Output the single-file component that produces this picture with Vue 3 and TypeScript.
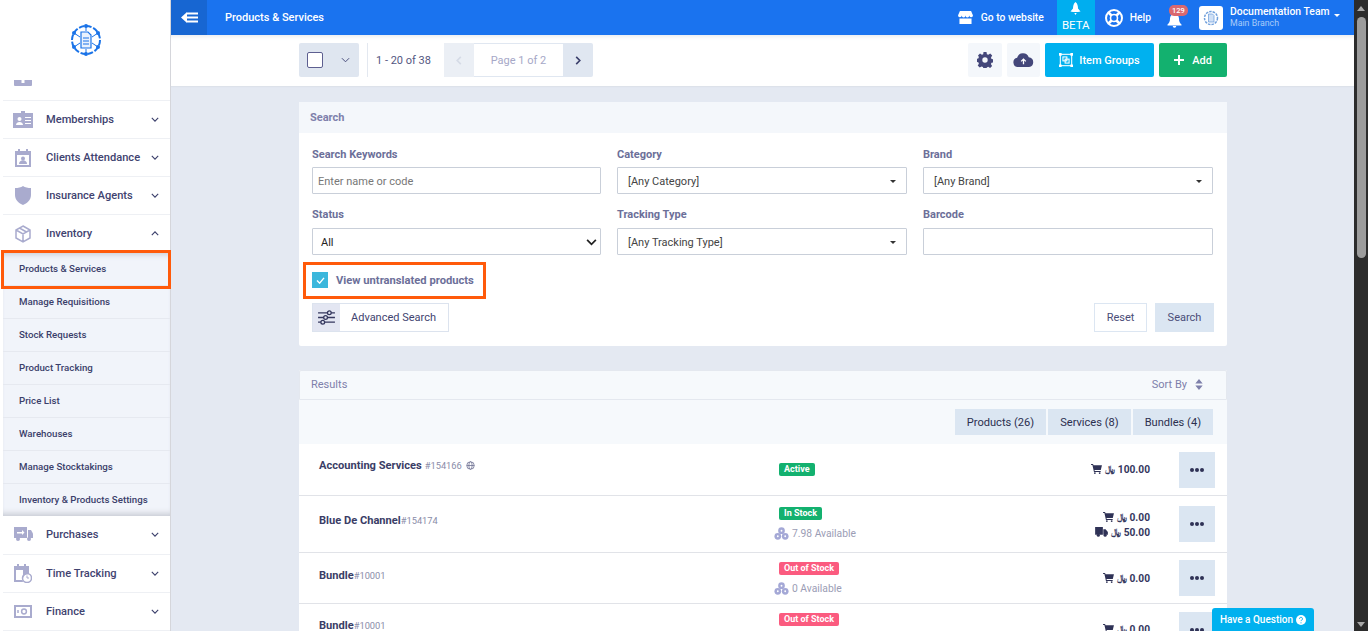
<template>
  <div class="app">
    <aside class="sidebar">
      <div class="logo">
        <svg viewBox="0 0 32 32" width="32" height="32" fill="none" stroke="#1a73e8">
          <circle cx="16" cy="16" r="14" stroke-width="2" stroke-dasharray="5.500 1.800" />
          <g fill="#1a73e8" stroke="none">
            <circle cx="16" cy="2" r="2" /><circle cx="16" cy="30" r="2" />
            <circle cx="4" cy="9" r="2" /><circle cx="28" cy="9" r="2" />
            <circle cx="4" cy="23" r="2" /><circle cx="28" cy="23" r="2" />
          </g>
          <path d="M4 9l6 4M28 9l-6 4M4 23l6-4M28 23l-6-4M16 2v5M16 30v-5" stroke-width="1" />
          <path d="M11 8h7l3 3v13H11z" fill="#eaf2fd" stroke-width="1.200" />
          <path d="M13 14h6M13 17h6M13 20h6" stroke-width="1" />
        </svg>
      </div>
      <nav class="menu">
        <div class="menu-cut">
          <svg viewBox="0 0 18 6" width="18" height="6"><path d="M0 0h18v5a1 1 0 0 1-1 1H1a1 1 0 0 1-1-1z" fill="#a9abce" /><path d="M7.500 0h3v3h-3z" fill="#fff" /></svg>
        </div>
        <a v-for="m in topMenu" :key="m.label" class="menu-item">
          <span class="menu-icon" v-html="m.icon"></span>
          <span class="menu-label">{{ m.label }}</span>
          <svg class="chev" viewBox="0 0 10 6" width="8" height="5"><path :d="m.open ? 'M1 5l4-4 4 4' : 'M1 1l4 4 4-4'" fill="none" stroke="#3b3f6b" stroke-width="1.400" /></svg>
        </a>
        <div class="submenu">
          <a v-for="s in subMenu" :key="s" class="sub-item">{{ s }}</a>
        </div>
        <a v-for="m in bottomMenu" :key="m.label" class="menu-item">
          <span class="menu-icon" v-html="m.icon"></span>
          <span class="menu-label">{{ m.label }}</span>
          <svg class="chev" viewBox="0 0 10 6" width="8" height="5"><path d="M1 1l4 4 4-4" fill="none" stroke="#3b3f6b" stroke-width="1.400" /></svg>
        </a>
      </nav>
      <div class="highlight side-mark"></div>
    </aside>

    <div class="main">
      <header class="topbar">
        <button class="back">
          <svg viewBox="0 0 17 11" width="17" height="11"><path d="M6 0L0 5.500 6 11z" fill="#fff" /><path d="M6 .5h11v2H6zM5 4.500h12v2H5zM6 8.500h11v2H6z" fill="#fff" /></svg>
        </button>
        <span class="page-title">Products &amp; Services</span>
        <div class="top-right">
          <a class="top-link">
            <svg viewBox="0 0 16 14" width="15" height="13"><path d="M2 0h12l2 4.500a2 2 0 0 1-4 .4 2 2 0 0 1-4 0 2 2 0 0 1-4 0 2 2 0 0 1-4-.4zM1.500 8h13v6h-13z" fill="#fff" /></svg>
            <span class="go">Go to website</span>
          </a>
          <div class="beta">
            <svg viewBox="0 0 11 13" width="11" height="13"><path d="M5.500 0C7.500 1.500 8 4 8 6.500l2.500 3-2.500.5H3l-2.500-.5 2.500-3C3 4 3.500 1.500 5.500 0zM4.300 11h2.400l-1.200 2z" fill="#fff" /></svg>
            <span>BETA</span>
          </div>
          <a class="top-link help">
            <svg viewBox="0 0 20 20" width="20" height="20" fill="none" stroke="#fff"><circle cx="10" cy="10" r="8" stroke-width="2" /><circle cx="10" cy="10" r="3.500" stroke-width="1.600" /><path d="M4.500 4.500L7.500 7.500M15.500 4.500l-3 3M4.500 15.500l3-3M15.500 15.500l-3-3" stroke-width="2.600" /></svg>
            <span>Help</span>
          </a>
          <div class="bell">
            <svg viewBox="0 0 14 14" width="15" height="14"><path d="M7 0a4.500 4.500 0 0 1 4.500 4.500c0 3.500 1 4.500 2.500 6v1H0v-1c1.500-1.500 2.500-2.500 2.500-6A4.500 4.500 0 0 1 7 0zM5.200 12h3.600a1.800 1.800 0 0 1-3.600 0z" fill="#fff" /></svg>
            <span class="badge">129</span>
          </div>
          <div class="user">
            <span class="avatar">
              <svg viewBox="0 0 32 32" width="16" height="16" fill="none" stroke="#6f9fdc"><circle cx="16" cy="16" r="13" stroke-width="3" stroke-dasharray="5 2" /><path d="M11 8h8l3 3v13H11z" fill="#cfe0f5" stroke-width="1.500" /></svg>
            </span>
            <span class="user-text">
              <b>Documentation Team</b>
              <i>Main Branch</i>
            </span>
            <span class="caret"></span>
          </div>
        </div>
      </header>

      <div class="toolbar">
        <div class="toolbar-inner">
          <div class="check-drop">
            <span class="check-box"></span>
            <svg viewBox="0 0 10 6" width="9" height="6"><path d="M1 1l4 4 4-4" fill="none" stroke="#4a4e7c" stroke-width="1.100" /></svg>
          </div>
          <span class="range">1 - 20 of 38</span>
          <div class="pager">
            <span class="pg-btn off"><svg viewBox="0 0 6 10" width="6" height="9"><path d="M5 1L1 5l4 4" fill="none" stroke="#d5dbe6" stroke-width="1.800" /></svg></span>
            <span class="pg-text">Page 1 of 2</span>
            <span class="pg-btn on"><svg viewBox="0 0 6 10" width="6" height="9"><path d="M1 1l4 4-4 4" fill="none" stroke="#3b3f6b" stroke-width="1.800" /></svg></span>
          </div>
          <div class="tools">
            <span class="tool">
              <svg viewBox="0 0 16 16" width="16" height="16"><path fill-rule="evenodd" d="M6.500 0h3l.4 2.200 1.400.6 1.900-1.300 2 2.100-1.200 1.900.5 1.400 2 .4v3l-2 .4-.6 1.400 1.200 1.900-2 2-1.900-1.200-1.400.6-.4 1.600h-3l-.4-2-1.400-.6-1.900 1.200-2-2 1.200-1.900-.6-1.400-2.200-.4v-3l2.200-.4.6-1.400L1 3.600l2-2.100 1.900 1.300 1.300-.6zM8 5.300a2.700 2.700 0 1 0 0 5.400 2.700 2.700 0 0 0 0-5.400z" fill="#44477a" /></svg>
            </span>
            <span class="tool upload">
              <svg viewBox="0 0 22 15" width="21" height="14"><path d="M5 15a5 5 0 0 1-.8-9.900A6.500 6.500 0 0 1 16.600 4.500 5.300 5.300 0 0 1 17 15z" fill="#44477a" /><path d="M11 12V7M8.500 9L11 6.500 13.500 9" fill="none" stroke="#fff" stroke-width="1.400" /></svg>
            </span>
            <button class="btn-groups">
              <svg viewBox="0 0 16 16" width="14" height="14" fill="none" stroke="#fff" stroke-width="1.200"><rect x="1.500" y="1.500" width="13" height="13" /><rect x="4.500" y="4.500" width="4.500" height="4.500" /><rect x="7" y="7" width="4.500" height="4.500" /><path d="M0 0h3v3H0zM13 0h3v3h-3zM0 13h3v3H0zM13 13h3v3h-3z" fill="#fff" stroke="none" /></svg>
              Item Groups
            </button>
            <button class="btn-add">
              <svg viewBox="0 0 10 10" width="10" height="10"><path d="M4 0h2v4h4v2H6v4H4V6H0V4h4z" fill="#fff" /></svg>
              Add
            </button>
          </div>
        </div>
      </div>

      <div class="content">
        <section class="card search-card">
          <div class="card-head">Search</div>
          <div class="search-body">
            <div class="grid">
              <label class="field">
                <span>Search Keywords</span>
                <input class="ctl ctl-input" placeholder="Enter name or code" />
              </label>
              <label class="field">
                <span>Category</span>
                <div class="ctl sel">[Any Category]<i class="sel-caret"></i></div>
              </label>
              <label class="field">
                <span>Brand</span>
                <div class="ctl sel">[Any Brand]<i class="sel-caret"></i></div>
              </label>
              <label class="field">
                <span>Status</span>
                <div class="ctl sel native">All
                  <svg viewBox="0 0 12 8" width="11" height="7"><path d="M1 1l5 5 5-5" fill="none" stroke="#222" stroke-width="2" /></svg>
                </div>
              </label>
              <label class="field">
                <span>Tracking Type</span>
                <div class="ctl sel">[Any Tracking Type]<i class="sel-caret"></i></div>
              </label>
              <label class="field">
                <span>Barcode</span>
                <input class="ctl" />
              </label>
            </div>
            <div class="untranslated">
              <span class="tick"><svg viewBox="0 0 10 8" width="9" height="7"><path d="M1 4l3 3 5-6" fill="none" stroke="#fff" stroke-width="1.600" /></svg></span>
              <b>View untranslated products</b>
              <div class="highlight check-mark"></div>
            </div>
            <div class="search-actions">
              <button class="adv">
                <span class="adv-icon">
                  <svg viewBox="0 0 18 16" width="17" height="15" fill="none" stroke="#34375e" stroke-width="1.400"><path d="M0 3h18M0 8h18M0 13h18" /><circle cx="12" cy="3" r="2" fill="#e3e6f2" /><circle cx="8" cy="8" r="2" fill="#e3e6f2" /><circle cx="5" cy="13" r="2" fill="#e3e6f2" /></svg>
                </span>
                <span class="adv-text">Advanced Search</span>
              </button>
              <div class="right-actions">
                <button class="reset">Reset</button>
                <button class="go-search">Search</button>
              </div>
            </div>
          </div>
        </section>

        <section class="card results">
          <div class="res-head">
            <span>Results</span>
            <span class="sort">Sort By
              <svg viewBox="0 0 8 12" width="8" height="11"><path d="M4 0l4 5H0zM4 12L0 7h8z" fill="#7e80ab" /></svg>
            </span>
          </div>
          <div class="tabs">
            <span class="tab">Products (26)</span>
            <span class="tab">Services (8)</span>
            <span class="tab">Bundles (4)</span>
          </div>
          <div v-for="(r, i) in rows" :key="i" class="row" :style="{ height: r.h + 'px' }">
            <div class="row-name" :style="{ paddingTop: r.nameTop + 'px' }">
              <b>{{ r.name }}</b><small :class="{ spaced: r.globe }">{{ r.code }}</small>
              <svg v-if="r.globe" viewBox="0 0 12 12" width="9" height="9" fill="none" stroke="#66688c"><circle cx="6" cy="6" r="5" /><ellipse cx="6" cy="6" rx="2.200" ry="5" /><path d="M1 6h10" /></svg>
            </div>
            <div class="row-status" :style="{ paddingTop: r.statusTop + 'px' }">
              <span class="tag" :class="r.tone">{{ r.status }}</span>
              <span v-if="r.avail" class="avail">
                <svg viewBox="0 0 16 14" width="15" height="13"><g fill="#a4a8d6"><circle cx="8" cy="4" r="3.600" /><circle cx="4" cy="10" r="3.600" /><circle cx="12" cy="10" r="3.600" /></g><g fill="#fff"><circle cx="8" cy="4" r="1" /><circle cx="4" cy="10" r="1" /><circle cx="12" cy="10" r="1" /></g></svg>
                {{ r.avail }}
              </span>
            </div>
            <div class="row-price" :style="{ top: r.priceTop + 'px' }">
              <div v-for="p in r.prices" :key="p.v" class="price">
                <svg v-if="p.kind === 'cart'" viewBox="0 0 12 11" width="11" height="10"><path d="M0 0h2.200l.5 1.500H12l-1.300 5H3.800l.3 1.200h6.500v1H3.200L1.500 1H0z" fill="#2f3256" /><circle cx="4.200" cy="10" r="1" fill="#2f3256" /><circle cx="9.500" cy="10" r="1" fill="#2f3256" /></svg>
                <svg v-else viewBox="0 0 14 11" width="13" height="10"><path d="M0 0h8.500v8.500H0zM9 2.500h2.500L14 5.500v3H9z" fill="#2f3256" /><circle cx="3.500" cy="9" r="1.700" fill="#2f3256" /><circle cx="11" cy="9" r="1.700" fill="#2f3256" /></svg>
                <em>﷼</em>
                <span>{{ p.v }}</span>
              </div>
            </div>
            <span class="more" :style="{ top: r.moreTop + 'px' }"><i></i><i></i><i></i></span>
          </div>
        </section>
      </div>
    </div>

    <a class="question">Have a Question
      <svg viewBox="0 0 10 10" width="10" height="10"><circle cx="5" cy="5" r="5" fill="#fff" /><path d="M3.500 3.800a1.500 1.500 0 1 1 2.200 1.300c-.5.300-.7.500-.7 1" fill="none" stroke="#00b1ef" stroke-width="1" /><circle cx="5" cy="7.800" r=".6" fill="#00b1ef" /></svg>
    </a>

    <div class="scrollbar">
      <svg viewBox="0 0 8 5" width="8" height="5"><path d="M4 0l4 5H0z" fill="#a8a8a8" /></svg>
      <span class="thumb"></span>
      <svg class="down" viewBox="0 0 8 5" width="8" height="5"><path d="M4 5L0 0h8z" fill="#a8a8a8" /></svg>
    </div>
  </div>
</template>

<script setup lang="ts">
interface MenuEntry {
  label: string
  icon: string
  open?: boolean
}

interface Price {
  kind: 'cart' | 'truck'
  v: string
}

interface Row {
  name: string
  code: string
  globe?: boolean
  status: string
  tone: 'green' | 'red'
  avail?: string
  prices: Price[]
  h: number
  nameTop: number
  statusTop: number
  priceTop: number
  moreTop: number
}

const wrap = (w: number, h: number, body: string) =>
  `<svg viewBox="0 0 ${w} ${h}" width="${w}" height="${h}" fill="#a9abce">${body}</svg>`

const topMenu: MenuEntry[] = [
  { label: 'Memberships', icon: wrap(20, 17, '<path d="M0 2h8V0h4v2h8v15H0z"/><circle cx="6.500" cy="8" r="2" fill="#fff"/><path d="M3 14c0-4 7-4 7 0z" fill="#fff"/><path d="M12 6.500h6M12 9.500h6M12 12.500h6" stroke="#fff" stroke-width="1.200"/>') },
  { label: 'Clients Attendance', icon: wrap(16, 18, '<path fill-rule="evenodd" d="M0 2h3V0h2v2h6V0h2v2h3v16H0zM2 6v10h12V6z"/><circle cx="8" cy="9.500" r="2"/><path d="M4 15c0-5 8-5 8 0z"/>') },
  { label: 'Insurance Agents', icon: wrap(16, 19, '<path d="M8 0c2 1.500 5 2 8 2v7c0 5-4 8.500-8 10C4 17.500 0 14 0 9V2c3 0 6-.5 8-2z"/>') },
  { label: 'Inventory', open: true, icon: wrap(16, 18, '<path d="M8 1l7 4v8l-7 4-7-4V5zM8 9v8M1 5l7 4 7-4M4.500 3l7 4" fill="none" stroke="#a9abce" stroke-width="1.500"/>') },
]

const subMenu = [
  'Products & Services',
  'Manage Requisitions',
  'Stock Requests',
  'Product Tracking',
  'Price List',
  'Warehouses',
  'Manage Stocktakings',
  'Inventory & Products Settings',
]

const bottomMenu: MenuEntry[] = [
  { label: 'Purchases', icon: wrap(19, 14, '<path fill-rule="evenodd" d="M0 0h13v11H0zM3 5v1.500h5V8l2.500-2.500L8 3v2z"/><path d="M14 3h3l2 3.500V11h-5z"/><circle cx="4" cy="12" r="2"/><circle cx="15" cy="12" r="2"/>') },
  { label: 'Time Tracking', icon: wrap(18, 19, '<path fill-rule="evenodd" d="M0 2h3V0h2v2h5V0h2v2h3v8a6 6 0 0 0-6 8H0zM2 6v10h7V6z"/><circle cx="13" cy="14" r="4.500" fill="none" stroke="#a9abce" stroke-width="1.500"/><path d="M13 11.500V14h2" fill="none" stroke="#a9abce"/>') },
  { label: 'Finance', icon: wrap(18, 15, '<path fill-rule="evenodd" d="M0 1h18v13H0zM2 3v9h14V3z"/><circle cx="10" cy="7.500" r="2.400" fill="none" stroke="#a9abce" stroke-width="1.500"/><path d="M4 6v3" stroke="#a9abce" stroke-width="1.500"/>') },
]

const rows: Row[] = [
  { name: 'Accounting Services', code: '#154166', globe: true, status: 'Active', tone: 'green', prices: [{ kind: 'cart', v: '100.00' }], h: 52, nameTop: 15, statusTop: 19, priceTop: 20, moreTop: 8 },
  { name: 'Blue De Channel', code: '#154174', status: 'In Stock', tone: 'green', avail: '7.98 Available', prices: [{ kind: 'cart', v: '0.00' }, { kind: 'truck', v: '50.00' }], h: 57, nameTop: 18, statusTop: 11, priceTop: 16, moreTop: 10 },
  { name: 'Bundle', code: '#10001', status: 'Out of Stock', tone: 'red', avail: '0 Available', prices: [{ kind: 'cart', v: '0.00' }], h: 51, nameTop: 16, statusTop: 9, priceTop: 20, moreTop: 7 },
  { name: 'Bundle', code: '#10001', status: 'Out of Stock', tone: 'red', prices: [{ kind: 'cart', v: '0.00' }], h: 51, nameTop: 15, statusTop: 9, priceTop: 20, moreTop: 8 },
]
</script>

<style>
html,
body {
  margin: 0;
  height: 100%;
  overflow: hidden;
}
</style>

<style scoped>
.app {
  position: relative;
  display: flex;
  width: 1368px;
  height: 631px;
  overflow: hidden;
  background: #e4e9f2;
  font-family: Roboto, "Liberation Sans", sans-serif;
  color: #34375e;
}

/* sidebar */
.sidebar {
  position: relative;
  flex: 0 0 171px;
  height: 631px;
  background: #fff;
  box-shadow: inset -1px 0 0 #d5d6db;
  box-sizing: border-box;
  overflow: hidden;
}
.logo {
  height: 80px;
  display: flex;
  align-items: center;
  justify-content: center;
}
.menu {
  padding: 0 1px 0 3px;
}
.menu-cut {
  height: 21px;
  padding-left: 11px;
  border-bottom: 1px solid #eef0f4;
  box-sizing: border-box;
  line-height: 0;
}
.menu-item {
  display: flex;
  align-items: center;
  height: 38px;
  box-sizing: border-box;
  border-bottom: 1px solid #eef0f4;
  font-size: 11.100px;
  font-weight: 500;
  color: #3f4370;
}
.submenu + .menu-item {
  height: 39px;
  padding-bottom: 2px;
}
.menu-icon {
  flex: 0 0 40px;
  margin-right: 3px;
  display: flex;
  justify-content: center;
}
.menu-label {
  flex: 1;
}
.chev {
  margin-right: 11px;
}
.submenu {
  background: #f1f4fa;
  box-shadow: inset 0 6px 6px -5px #c3c6cf, inset 0 -7px 6px -5px #c3c6cf;
}
.sub-item {
  display: flex;
  align-items: center;
  height: 33px;
  box-sizing: border-box;
  padding: 0 0 2px 16px;
  border-bottom: 1px solid #e6e9f0;
  font-size: 9.700px;
  font-weight: 500;
  color: #3b3f6b;
}
.sub-item:last-child {
  height: 32px;
  padding-bottom: 1px;
  border-bottom: 0;
}
.highlight {
  position: absolute;
  border: 3px solid #ff5a0a;
  box-sizing: border-box;
  pointer-events: none;
}
.side-mark {
  left: 1px;
  top: 250px;
  width: 170px;
  height: 39px;
}

/* top bar */
.main {
  flex: 1;
  min-width: 0;
  display: flex;
  flex-direction: column;
  margin-right: 14px;
}
.topbar {
  display: flex;
  align-items: center;
  height: 35px;
  background: #1a73ef;
  color: #fff;
  flex: none;
}
.back {
  width: 36px;
  height: 35px;
  border: 0;
  padding: 0;
  background: #1766d2;
  display: flex;
  align-items: center;
  justify-content: center;
}
.page-title {
  margin-left: 18px;
  font-size: 11px;
  font-weight: 500;
}
.top-right {
  margin-left: auto;
  display: flex;
  align-items: center;
  height: 35px;
}
.top-link {
  display: flex;
  align-items: center;
  font-size: 10.300px;
  font-weight: 500;
}
.go {
  margin-left: 8px;
}
.beta {
  width: 38px;
  height: 35px;
  margin-left: 13px;
  background: #00aeef;
  display: flex;
  flex-direction: column;
  align-items: center;
  font-size: 11.500px;
  padding-top: 2px;
  box-sizing: border-box;
  gap: 3px;
}
.help {
  margin-left: 9px;
  gap: 6px;
}
.bell {
  position: relative;
  margin-left: 16px;
  width: 15px;
  height: 14px;
  margin-top: 4px;
}
.badge {
  position: absolute;
  left: 2px;
  top: -8px;
  padding: 0 3px;
  height: 11px;
  line-height: 11px;
  border-radius: 5px;
  background: #d9686f;
  font-size: 7.500px;
  font-weight: 500;
  white-space: nowrap;
}
.user {
  margin-left: 17px;
  display: flex;
  align-items: center;
  width: 155px;
}
.avatar {
  width: 24px;
  height: 24px;
  background: #fff;
  border-radius: 3px;
  display: flex;
  align-items: center;
  justify-content: center;
}
.user-text {
  margin: -2px 0 0 7px;
  display: flex;
  flex-direction: column;
}
.user-text b {
  font-size: 10.400px;
  font-weight: 500;
  white-space: nowrap;
}
.user-text i {
  font-style: normal;
  font-size: 8.800px;
  color: #a9cbf9;
}
.caret {
  margin: -4px 0 0 4px;
  border: 3.500px solid transparent;
  border-top-color: #fff;
  border-bottom: 0;
}

/* toolbar */
.toolbar {
  flex: none;
  height: 51px;
  background: #fff;
  box-shadow: inset 0 6px 5px -5px #e3e5ea, 0 1px 1px #dde2ea;
  box-sizing: border-box;
  padding: 8px 127px 0 128px;
}
.toolbar-inner {
  display: flex;
  align-items: flex-start;
  height: 34px;
}
.check-drop {
  width: 60px;
  height: 34px;
  background: #dfe6f0;
  border-radius: 2px;
  display: flex;
  align-items: center;
  box-sizing: border-box;
  padding-left: 8px;
  gap: 18px;
}
.check-box {
  width: 14px;
  height: 14px;
  border: 1px solid #5d5f90;
  border-radius: 2px;
  background: #fff;
}
.range {
  margin-left: 8px;
  padding-left: 8px;
  height: 34px;
  line-height: 36px;
  border-left: 1px solid #e3e8f0;
  font-size: 11px;
  color: #54577f;
  width: 68px;
  flex: none;
}
.pager {
  display: flex;
  height: 34px;
  background: #e0e7f1;
  border-radius: 2px;
}
.pg-btn {
  width: 30px;
  display: flex;
  align-items: center;
  justify-content: center;
}
.pg-btn.off {
  background: #ebeff5;
}
.pg-text {
  width: 89px;
  margin: 1px 0;
  background: #fff;
  display: flex;
  align-items: center;
  justify-content: center;
  font-size: 11px;
  color: #a6a8c7;
}
.tools {
  margin-left: auto;
  display: flex;
  gap: 5px;
}
.tool {
  width: 34px;
  height: 34px;
  background: #f4f7fb;
  border-radius: 2px;
  display: flex;
  align-items: center;
  justify-content: center;
}
.tool.upload {
  width: 33px;
}
.btn-groups,
.btn-add {
  height: 34px;
  border: 0;
  border-radius: 2px;
  color: #fff;
  display: flex;
  align-items: center;
  justify-content: center;
  font-family: inherit;
  font-size: 11px;
  font-weight: 500;
  padding: 0;
}
.btn-groups {
  width: 109px;
  background: #00b1ef;
  gap: 6px;
}
.btn-add {
  width: 68px;
  background: #13b16f;
  gap: 8px;
}

/* content */
.content {
  flex: 1;
  padding: 16px 127px 0 128px;
  overflow: hidden;
}
.card {
  background: #fff;
  border-radius: 2px;
}
.card-head {
  height: 31px;
  line-height: 31px;
  padding-left: 11px;
  background: #f4f7fb;
  font-size: 11px;
  font-weight: 700;
  color: #7e80ab;
}
.search-body {
  padding: 15px 13px 14px 13px;
}
.grid {
  display: grid;
  grid-template-columns: 289px 290px 290px;
  column-gap: 16px;
  row-gap: 14px;
}
.field {
  display: flex;
  flex-direction: column;
  gap: 6px;
  font-size: 11px;
  line-height: 13px;
  font-weight: 700;
  color: #6c6f99;
}
.field:nth-child(n + 4) {
  gap: 7px;
}
.ctl {
  height: 27px;
  box-sizing: border-box;
  border: 1px solid #c9cfd9;
  border-radius: 1px;
  background: #fff;
  padding: 2px 5px 0;
  font-family: inherit;
  font-size: 11px;
  font-weight: 400;
  color: #444;
  outline: none;
  width: 100%;
}
.ctl::placeholder {
  color: #777;
}
.sel {
  position: relative;
  display: flex;
  align-items: center;
  justify-content: space-between;
  padding-left: 10px;
  padding-right: 10px;
}
.native {
  padding: 2px 3px 0 8px;
  color: #222;
}
.sel-caret {
  border: 3.500px solid transparent;
  border-top-color: #333;
  border-bottom: 0;
}
.untranslated {
  position: relative;
  display: flex;
  align-items: center;
  height: 16px;
  margin-top: 17px;
  gap: 8px;
  font-size: 11.200px;
  color: #6c6f99;
}
.tick {
  width: 16px;
  height: 16px;
  background: #3cb7dc;
  display: flex;
  align-items: center;
  justify-content: center;
}
.check-mark {
  left: -9px;
  top: -10px;
  width: 183px;
  height: 37px;
}
.search-actions {
  display: flex;
  align-items: center;
  justify-content: space-between;
  margin-top: 15px;
}
.adv {
  display: flex;
  height: 29px;
  padding: 0;
  border: 1px solid #dce3ee;
  background: #fff;
  font-family: inherit;
  box-sizing: border-box;
}
.adv-icon {
  width: 27px;
  background: #e3e6f2;
  display: flex;
  align-items: center;
  justify-content: center;
}
.adv-text {
  width: 97px;
  padding-left: 11px;
  text-align: left;
  line-height: 27px;
  font-size: 11px;
  color: #3f4370;
}
.right-actions {
  display: flex;
  gap: 8px;
}
.reset,
.go-search {
  height: 29px;
  font-family: inherit;
  font-size: 11px;
  color: #4a4d78;
  padding: 0;
  box-sizing: border-box;
}
.reset {
  width: 53px;
  background: #fff;
  border: 1px solid #dce6f2;
}
.go-search {
  width: 59px;
  border: 0;
  background: #dbe6f2;
}

/* results */
.results {
  margin-top: 24px;
}
.res-head {
  height: 30px;
  display: flex;
  align-items: center;
  justify-content: space-between;
  padding: 0 23px 2px 11px;
  background: #f6f9fc;
  border: 1px solid #e4e8ef;
  border-radius: 2px 2px 0 0;
  font-size: 11px;
  color: #7e80ab;
  box-sizing: border-box;
}
.sort {
  display: flex;
  align-items: center;
  gap: 8px;
}
.tabs {
  height: 44px;
  display: flex;
  justify-content: flex-end;
  gap: 2px;
  padding: 9px 14px 0 0;
  box-sizing: border-box;
  background: #f6f9fc;
}
.tab {
  height: 26px;
  padding: 0 12px;
  line-height: 27px;
  background: #dbe6f2;
  font-size: 11.100px;
  color: #2c2f4f;
}
.row {
  position: relative;
  display: flex;
  align-items: flex-start;
  box-sizing: border-box;
  border-bottom: 1px solid #e1e3e8;
  background: #fff;
}
.row-name {
  width: 480px;
  padding-left: 20px;
  box-sizing: border-box;
  display: flex;
  align-items: center;
  font-size: 11.100px;
  line-height: 13px;
  color: #3a3d66;
}
.row-name small {
  font-size: 9.300px;
  color: #8a8ca8;
  margin-right: 4px;
}
.row-name small.spaced {
  margin-left: 3px;
}
.row-status {
  display: flex;
  flex-direction: column;
  align-items: flex-start;
  gap: 7px;
  width: 250px;
}
.tag {
  height: 13px;
  line-height: 13px;
  padding: 0 5px;
  border-radius: 2px;
  font-size: 9px;
  font-weight: 700;
  color: #fff;
}
.tag.green {
  background: #13b16f;
}
.tag.red {
  background: #fb5b7f;
}
.avail {
  display: flex;
  align-items: center;
  gap: 3px;
  margin-left: -5px;
  font-size: 10.300px;
  color: #9b9db5;
}
.row-price {
  position: absolute;
  right: 77px;
  display: flex;
  flex-direction: column;
  align-items: flex-end;
  gap: 5px;
}
.price {
  display: flex;
  align-items: center;
  gap: 3px;
  height: 10px;
  font-size: 10.200px;
  font-weight: 700;
  color: #34375e;
}
.price em {
  font-style: normal;
  font-family: "DejaVu Sans", sans-serif;
  font-size: 8.500px;
}
.more {
  position: absolute;
  right: 12px;
  width: 36px;
  height: 36px;
  background: #dbe6f2;
  display: flex;
  align-items: center;
  justify-content: center;
  gap: 1px;
}
.more i {
  width: 4px;
  height: 4px;
  border-radius: 50%;
  background: #2f3256;
}

.question {
  position: absolute;
  right: 54px;
  bottom: 0;
  width: 102px;
  height: 23px;
  background: #00b1ef;
  border-radius: 3px 3px 0 0;
  color: #fff;
  font-size: 10px;
  font-weight: 500;
  display: flex;
  align-items: center;
  justify-content: center;
  gap: 3px;
}

.scrollbar {
  position: absolute;
  right: 0;
  top: 0;
  width: 14px;
  height: 631px;
  background: #2c2c2c;
  display: flex;
  flex-direction: column;
  align-items: center;
  padding-top: 6px;
  box-sizing: border-box;
  gap: 6px;
}
.thumb {
  width: 9px;
  height: 241px;
  background: #9c9c9c;
  border-radius: 5px;
}
.down {
  position: absolute;
  bottom: 4px;
  left: 3px;
}
</style>
